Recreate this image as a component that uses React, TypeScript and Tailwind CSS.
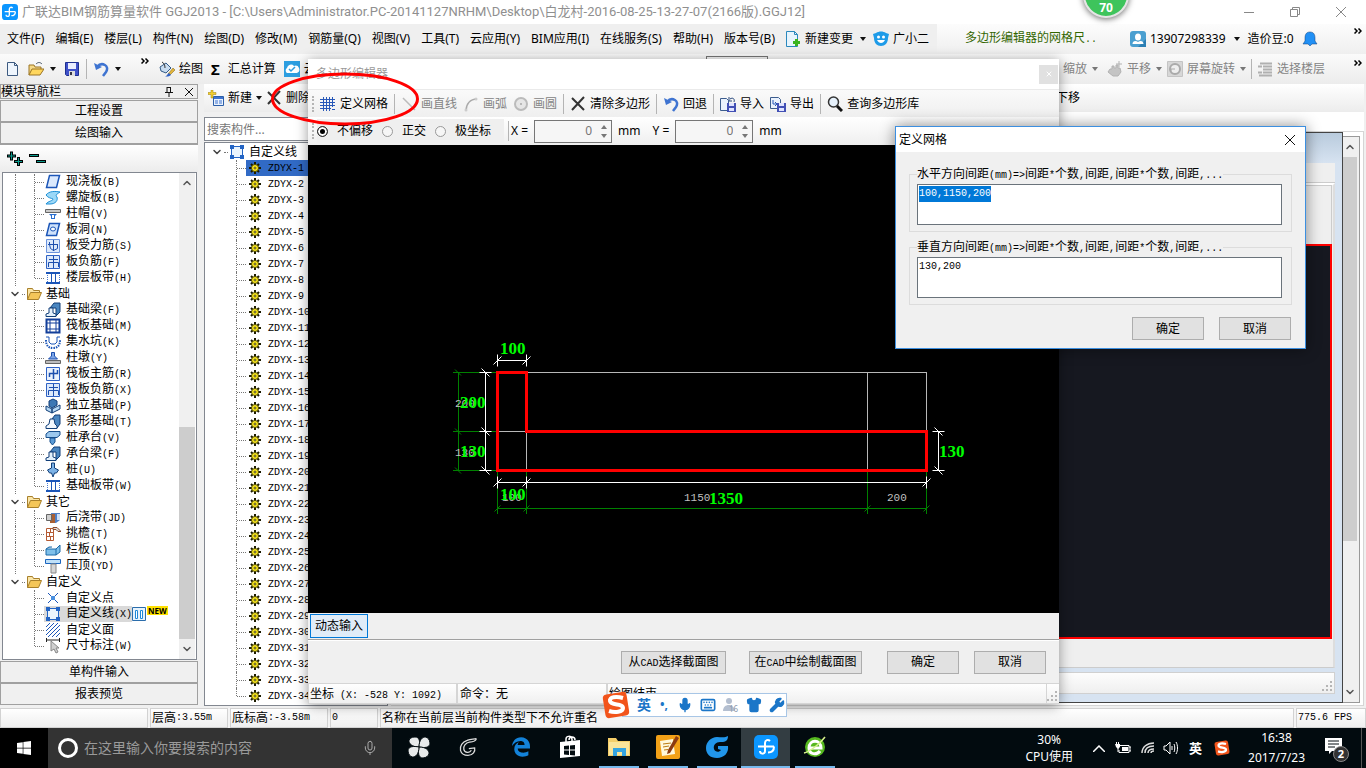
import { Fragment, useEffect, useRef } from "react";
import type { ReactNode } from "react";
import { Wrench, Mic, Shirt, Keyboard, X, ChevronDown, ChevronUp } from "lucide-react";
import { FaWindows, FaEdgeLegacy } from "react-icons/fa";

const treeGroups = [
    {
        title: "",
        items: [
            ["slab", "现浇板(B)"],
            ["spiral", "螺旋板(B)"],
            ["cap", "柱帽(V)"],
            ["hole", "板洞(N)"],
            ["rebarS", "板受力筋(S)"],
            ["rebarF", "板负筋(F)"],
            ["strip", "楼层板带(H)"],
        ],
    },
    {
        title: "基础",
        items: [
            ["beam", "基础梁(F)"],
            ["raft", "筏板基础(M)"],
            ["pit", "集水坑(K)"],
            ["pier", "柱墩(Y)"],
            ["rebarR", "筏板主筋(R)"],
            ["rebarF", "筏板负筋(X)"],
            ["footing", "独立基础(P)"],
            ["stripFooting", "条形基础(T)"],
            ["pileCap", "桩承台(V)"],
            ["beam", "承台梁(F)"],
            ["pile", "桩(U)"],
            ["strip", "基础板带(W)"],
        ],
    },
    {
        title: "其它",
        items: [
            ["pour", "后浇带(JD)"],
            ["eave", "挑檐(T)"],
            ["railing", "栏板(K)"],
            ["coping", "压顶(YD)"],
        ],
    },
    {
        title: "自定义",
        items: [
            ["point", "自定义点"],
            ["polygon", "自定义线(X)"],
            ["hatch", "自定义面"],
            ["dimension", "尺寸标注(W)"],
        ],
    },
];

const menus = [
    "文件(F)", "编辑(E)", "楼层(L)", "构件(N)", "绘图(D)", "修改(M)", "钢筋量(Q)", "视图(V)",
    "工具(T)", "云应用(Y)", "BIM应用(I)", "在线服务(S)", "帮助(H)", "版本号(B)",
];

const lineTypes = Array.from({ length: 34 }, (_, i) => `ZDYX-${i + 1}`);

const glyphs: Record<string, ReactNode> = {
    slab: <path d="M4.500 1.500h10l-3 12h-10z" fill="#dbe9fd" stroke="#1c56b8" strokeWidth="1.500" />,
    spiral: <path d="M1 5c3-4 9-4 14-3-3 2-5 3-3 5 1 3-1 7-7 7H1c2-3 7-3 7-5C6 8 3 8 1 5z" fill="#9bd8f7" stroke="#1d8fd6" />,
    cap: <><path d="M.500 3.500h15v3H.500z" fill="#c9c9c9" stroke="#666" /><path d="M4 8h8l-2 2v3H6v-3z" fill="#2b6fd0" /><path d="M7 9h2v3H7z" fill="#fff" /></>,
    hole: <><path d="M4.500 1.500h10l-3 12h-10z" fill="#cfe2fb" stroke="#1c56b8" strokeWidth="1.500" /><ellipse cx="8" cy="7" rx="2.500" ry="2" fill="#fff" stroke="#1c56b8" /></>,
    rebarS: <><path d="M1.500 1.500h13v13h-13z" fill="#dce9fb" stroke="#6b93dc" /><path d="M8.500 2v11M3 6.500h10M4.500 4v2.500l1 4 3 2 4-2v-4" fill="none" stroke="#1c4fae" /></>,
    rebarF: <><path d="M1.500 1.500h13v13h-13z" fill="#dce9fb" stroke="#2f62c4" /><path d="M8.500 2v12M4 5.500h9M3.500 13V8.500h10V13" fill="none" stroke="#1c4fae" /></>,
    rebarR: <><path d="M1.500 1.500h13v13h-13z" fill="#eaf2fd" stroke="#2f62c4" /><path d="M8.500 3v10M4.500 11V7.500h8V4" fill="none" stroke="#1c4fae" strokeWidth="1.500" /></>,
    strip: <><path d="M1 3h14M1 13h14" stroke="#1c56b8" strokeWidth="2" /><path d="M6.500 4v8M10.500 4v8" stroke="#1c56b8" /><path d="M2.500 5v7M14.500 5v7" stroke="#4a79d0" strokeDasharray="1 1" /></>,
    beam: <><path d="M5 6l4-5h6v9l-4 4V6z" fill="#4a86c0" stroke="#123f78" /><path d="M1 14.500V12l3-1V6h4v5l3 1v2.500z" fill="#e4f1fc" stroke="#123f78" /></>,
    raft: <><path d="M1.500 1.500h13v13h-13z" fill="#fff" stroke="#123f9a" strokeWidth="2" /><path d="M5 1v14M11 1v14M1 5h14M1 11h14" stroke="#123f9a" /></>,
    pit: <><path d="M1 3h3v5l2 2h4l2-2V3h3" fill="none" stroke="#1c56b8" /><path d="M1 6c0 5 2 8 7 8s7-3 7-8" fill="none" stroke="#1c56b8" strokeWidth="2" strokeDasharray="1.500 1" /></>,
    pier: <><path d="M.500 10.500h15v3H.500z" fill="#bdbdbd" stroke="#666" /><path d="M6.500 2.500h3V6l3 3h-9l3-3z" fill="#7ba4e6" stroke="#1c4fae" /></>,
    footing: <><path d="M1 8l6 3v4l-6-3zM7 11l8-4v4l-8 4z" fill="#b5d8f4" stroke="#123f78" /><path d="M4 3l4-2 4 2v4L7 10 4 8z" fill="#3d78b4" stroke="#123f78" /></>,
    stripFooting: <><path d="M7 5l3-4h5v9l-3 4z" fill="#4a86c0" stroke="#123f78" /><path d="M1 14.500V12l3-2 1-5h4l1 5 2 2v2.500z" fill="#f2f8fe" stroke="#123f78" /></>,
    pileCap: <><path d="M1 4l3-2.500h11V5l-3 2.500H1z" fill="#9cc8ee" stroke="#174f8d" /><path d="M5 8h5v4l-2.500 3L5 12z" fill="#5b9bd6" stroke="#174f8d" /></>,
    pile: <path d="M6.500 1h3v5l4 2-2 3h-2L8 15l-1.500-4h-2l-2-3 4-2z" fill="#7cb2e6" stroke="#123f78" />,
    pour: <><path d="M6 3h9v7l-4 3H6z" fill="#4f7fc4" /><path d="M5 4h5v9H5z" fill="#a85f34" /><path d="M1.500 4.500h5v6h-5z" fill="#cfcfcf" stroke="#666" /><path d="M12 4h3v6h-3z" fill="#cfe0f6" /></>,
    eave: <><path d="M1.500 2.500h7v12h-7zM1 6.500h8M1 10.500h8M5.500 2v4M4.500 6v4M5.500 10v4" fill="#fff" stroke="#b55a33" /><path d="M8 1.500h4l4 4h-3l-2-2H8z" fill="#ddd" stroke="#8b4a2b" /></>,
    railing: <path d="M1 7h10l4-4v7l-4 3H1zM1 7l3-2h3M11 7v6" fill="#7fc0ea" stroke="#1c6aa8" />,
    coping: <><path d="M.500 1.500h15v4H.500z" fill="#bfe0f8" stroke="#1c66c0" /><path d="M6 6h5v9H6z" fill="#d5d5d5" stroke="#888" /></>,
    point: <><path d="M3 3l10 10M13 3L3 13" stroke="#1c56b8" /><path d="M6 6h4v4H6z" fill="#4a90e0" /></>,
    polygon: <><path d="M2.500 2.500h11v11h-11z" fill="#eaf4fd" stroke="#2364c4" /><path d="M1 1h4v4H1zM11 1h4v4h-4zM1 11h4v4H1zM11 11h4v4h-4z" fill="#2364c4" /></>,
    hatch: <path d="M1 5l4-4M1 9l8-8M1 13l12-12M3 15L15 3M7 15l8-8M11 15l4-4" stroke="#1c56b8" />,
    dimension: <><path d="M1.500 0v4M14.500 0v4M1 2h14" stroke="#222" /><path d="M6 3v10l3-2 2 4 2-1-2-4h3z" fill="#d0d0d0" stroke="#888" /></>,
    newFile: <><path d="M3.500 1.500h7l3 3v10h-10z" fill="#eef5fd" stroke="#3d5a80" /><path d="M10.500 1.500v3h3" fill="none" stroke="#3d5a80" /></>,
    openFile: <><path d="M1 14V4h5l1 2h6v3" fill="#f5d987" stroke="#9b7524" /><path d="M1 14l3-6h12l-4 6z" fill="#ffd75e" stroke="#9b7524" /><path d="M8 3c2-2 4-2 6 0" fill="none" stroke="#456" /></>,
    folder: <><path d="M1.500 13.500v-11h5l1 2h6v3" fill="#fbe6a8" stroke="#a8802b" /><path d="M1.500 13.500l3-7h11l-3 7z" fill="#f4c659" stroke="#a8802b" /></>,
    save: <><path d="M1.500 1.500h13v13h-12l-1-1z" fill="#3f51c9" stroke="#1e2f91" /><path d="M4 2h8v6H4z" fill="#e9edff" /><path d="M5 10h6v5H5z" fill="#ddd" /><path d="M6 11h2v3H6z" fill="#334" /></>,
    undo: <><path d="M1 2l2 7 6-3z" fill="#3f74d1" /><path d="M4 6c5-6 13-1 9 5l-3 4" fill="none" stroke="#3f74d1" strokeWidth="2.500" /></>,
    paint: <><path d="M1 6l6-4 5 5-5 5-5-2z" fill="#c8dcf0" stroke="#345b87" /><path d="M3 1c2 1 3 3 3 6" fill="none" stroke="#333" /><path d="M14 7l2 2-5 5-2-1z" fill="#e2b53a" stroke="#7b5d12" strokeWidth=".500" /><path d="M10 12l2 2c-2 2-4 1-6 2 2-1 2-3 4-4z" fill="#2f62c4" /></>,
    cloud: <><path d="M0 0h16v16H0z" fill="#2d9ee0" /><path d="M3 12a3 3 0 010-5 4 4 0 017-2 3 3 0 013 7z" fill="#fff" /><path d="M5 8l2 2 4-4" fill="none" stroke="#2d9ee0" strokeWidth="1.500" /></>,
    change: <><path d="M1.500.500h8l3 3v12h-11z" fill="#e7f4fd" stroke="#2b88bd" /><path d="M9.500.500v3h3" fill="none" stroke="#2b88bd" /><path d="M10 8h3v2h2v3h-2v2h-3v-2H8v-3h2z" fill="#3bb41e" /></>,
    mascot: <><path d="M3 2c3-2 7-2 10 0l3 1-1 4c0 5-3 8-7 8S1 12 1 7L0 3z" fill="#1e9be8" /><circle cx="5.500" cy="6" r="1.500" fill="#fff" /><circle cx="10.500" cy="6" r="1.500" fill="#fff" /><path d="M4 9c2 4 6 4 8 0z" fill="#fff" /></>,
    user: <><rect width="16" height="16" rx="3" fill="#4a9fd0" /><path d="M8 16l8-8v8z" fill="#2c7fb4" /><ellipse cx="8" cy="6" rx="3" ry="3.500" fill="#fff" /><path d="M2.500 13c0-3 3-4 5.500-2 2.500-2 5.500-1 5.500 2z" fill="#fff" /></>,
    bell: <path d="M8 1c4 0 5 3 5 6v3l2 3h-5l-2 2-2-2H1l2-3V7c0-3 1-6 5-6z" fill="#2190f5" stroke="#123f78" strokeWidth=".500" />,
    hand: <path d="M3 8h2V5h2v2h2V4h2v3h2l1 4-3 4H6L1 11zM12 0v6M9 3h6" fill="#c4c4c4" stroke="#b2b2b2" />,
    rotate: <><path d="M.500.500h15v15H.500z" fill="#d7d7d7" stroke="#c4c4c4" /><circle cx="8" cy="8" r="5" fill="#eee" stroke="#aaa" strokeWidth="2" /><path d="M4 11v-3h4" fill="none" stroke="#aaa" /></>,
    floors: <path d="M3 2.500h12M1 5.500h4M6 5.500h9M6 8.500h9M1 11.500h4M6 11.500h9M2 14.500h13" stroke="#b0b0b0" strokeWidth="2" />,
    create: <><path d="M5.500 6.500h10v9h-10z" fill="#eaf2fd" stroke="#2b5ea8" /><path d="M6 7h9v2H6z" fill="#3f74d1" /><path d="M7 11h3M11 11h3M7 13h3M11 13h3" stroke="#3f74d1" /><path d="M3 0h2v2.500h3v2H5V8H3V4.500H0v-2h3z" fill="#f3cf2e" stroke="#9b7c12" strokeWidth=".500" /></>,
    grid: <path d="M3.500 1v14M6.500 1v14M9.500 1v14M12.500 1v10M0 3.500h15M0 6.500h15M0 9.500h15M0 12.500h11M12 13.500h3" stroke="#2858b8" />,
    line: <path d="M2 2l12 12" stroke="#bbb" strokeWidth="1.500" />,
    arc: <><path d="M3 15c0-7 4-12 11-12" fill="none" stroke="#aaa" strokeWidth="1.500" /><circle cx="13" cy="3" r="1.500" fill="#ccc" /><circle cx="3" cy="14" r="1.500" fill="#ccc" /></>,
    circle: <><circle cx="8" cy="8" r="6" fill="#e6e6e6" stroke="#bbb" strokeWidth="2" /><circle cx="8" cy="8" r="1" fill="#aaa" /></>,
    clear: <path d="M2 2l12 12M14 1L2 14" stroke="#333" strokeWidth="2" />,
    importFile: <><path d="M.500 2.500h6l2 2v10h-8z" fill="#eaf2fd" stroke="#3c5d8e" /><path d="M7 7h9v9H7z" fill="#4250b5" /><path d="M9 7h5v3H9zM9 12h5v3H9z" fill="#dfe3ff" /><path d="M10 3c3-2 5 0 4 3M9 1v4h3" fill="none" stroke="#28487d" /></>,
    exportFile: <><path d="M.500 1.500h8l2 2v9h-10z" fill="#eaf2fd" stroke="#3c5d8e" /><path d="M7 7h9v9H7z" fill="#4250b5" /><path d="M9 7h5v3H9zM9 12h5v3H9z" fill="#dfe3ff" /><path d="M3 4v4h4M5 6l2 2-2 2" fill="none" stroke="#2858b8" /></>,
    query: <><circle cx="6.500" cy="6" r="5" fill="#e6f1fb" stroke="#333" strokeWidth="1.500" /><path d="M10 10l5 5" stroke="#111" strokeWidth="3" /></>,
    gear: <><path d="M8 2v12M2 8h12M4 4l8 8M12 4l-8 8" stroke="#1c1c00" strokeWidth="2" /><circle cx="8" cy="8" r="3.500" fill="#ffee20" stroke="#4d4600" /><circle cx="8" cy="8" r="1" fill="#fff" stroke="#4d4600" /></>,
};

function Glyph({ name, className = "size-4" }: { name: string; className?: string }) {
    return (
        <svg viewBox="0 0 16 16" className={`shrink-0 ${className}`} aria-hidden="true">
            {glyphs[name]}
        </svg>
    );
}

// CJK at 12px with half-width latin, so that two latin letters take one CJK cell
function Song({ children }: { children: string }) {
    return (
        <>
            {children.split(/([\x20-\x7e]+)/).map((part, i) =>
                i % 2 ? (
                    <span key={i} className="font-['Liberation_Mono',monospace] text-[10px] whitespace-pre">{part}</span>
                ) : (
                    <Fragment key={i}>{part}</Fragment>
                )
            )}
        </>
    );
}

function Caret({ dim = false }: { dim?: boolean }) {
    return (
        <svg viewBox="0 0 6 4" className="h-1 w-1.5 shrink-0" aria-hidden="true">
            <path d="M0 0h6L3 4z" fill={dim ? "#777" : "#111"} />
        </svg>
    );
}

function More() {
    return (
        <button type="button" aria-label="更多" className="mt-1 shrink-0 self-start">
            <svg viewBox="0 0 8 6" className="h-1.5 w-2"><path d="M.5.5L3 3 .5 5.500M4.500.5L7 3 4.500 5.500" fill="none" stroke="#000" strokeWidth="1.500" /></svg>
        </button>
    );
}

function Sep() {
    return <span className="h-5 w-px shrink-0 bg-[#b4b4b4]" />;
}

function Grip() {
    return <span className="h-4 w-0 shrink-0 border-l-2 border-dotted border-[#b5b5b5]" />;
}

function AppMark({ className }: { className: string }) {
    return (
        <svg viewBox="0 0 24 24" className={className} aria-hidden="true">
            <rect width="24" height="24" rx="5" fill="#0b96ff" />
            <path d="M16 6c-2-2-5-1-5 2v8c0 4-5 3-5 0M4 11.500h16M20 11.500c0 4-2 6-6 6" fill="none" stroke="#fff" strokeWidth="2" />
        </svg>
    );
}

function ToolButton({ icon, label, dim = false }: { icon?: string; label: string; dim?: boolean }) {
    return (
        <button type="button" className={`flex shrink-0 items-center gap-1 whitespace-nowrap ${dim ? "text-[#848484]" : "text-black"}`}>
            {icon && <Glyph name={icon} />}
            {label}
        </button>
    );
}

function TitleBar() {
    return (
        <header className="flex h-6 shrink-0 items-center bg-white pl-0.5 text-[#8f8f8f]">
            <AppMark className="size-4 shrink-0" />
            <h1 className="ml-1 font-['Roboto','Noto_Sans_CJK_SC',sans-serif] text-[13px] whitespace-nowrap">
                广联达BIM钢筋算量软件 GGJ2013 - [C:\Users\Administrator.PC-20141127NRHM\Desktop\白龙村-2016-08-25-13-27-07(2166版).GGJ12]
            </h1>
            <div className="ml-auto flex items-center gap-9 pr-5">
                <button type="button" aria-label="最小化" className="h-px w-2.5 bg-[#888]" />
                <button type="button" aria-label="还原">
                    <svg viewBox="0 0 10 10" className="size-2.5"><path d="M.5 2.500h7v7h-7zM2.500 2V.5h7v7H8" fill="none" stroke="#888" /></svg>
                </button>
                <button type="button" aria-label="关闭">
                    <svg viewBox="0 0 10 10" className="size-2.5"><path d="M0 0l10 10M10 0L0 10" stroke="#888" /></svg>
                </button>
            </div>
        </header>
    );
}

function MenuBar() {
    return (
        <nav className="flex h-[30px] shrink-0 items-center bg-[#efefef] pl-[7px]">
            <div className="flex gap-[11px]">
                {menus.map((m) => (
                    <button key={m} type="button" className="whitespace-nowrap">{m}</button>
                ))}
            </div>
            <div className="ml-2.5 flex items-center gap-[7px]">
                <ToolButton icon="change" label="新建变更" />
                <Caret />
                <ToolButton icon="mascot" label="广小二" />
            </div>
            <div className="ml-auto flex h-full w-[429px] shrink-0 items-center bg-linear-to-b from-[#fcfcfc] to-[#efefef] pl-7">
                <span className="w-[165px] text-[#336600]"><Song>多边形编辑器的网格尺..</Song></span>
                <ToolButton icon="user" label="13907298339" />
                <span className="ml-2 flex"><Caret /></span>
                <span className="ml-2 whitespace-nowrap">造价豆:0</span>
                <Glyph name="bell" className="ml-2 size-4" />
                <span className="ml-auto flex self-start pr-1"><More /></span>
            </div>
        </nav>
    );
}

function MainToolbar() {
    return (
        <div className="flex h-[30px] shrink-0 items-center bg-linear-to-b from-[#fbfbfb] to-[#ececec] pl-1">
            <Glyph name="newFile" />
            <Glyph name="openFile" className="ml-2 size-4" />
            <span className="ml-1.5 flex"><Caret /></span>
            <Glyph name="save" className="ml-2 size-4" />
            <span className="ml-1.5 flex"><Sep /></span>
            <Glyph name="undo" className="ml-1.5 size-4" />
            <span className="ml-1.5 flex"><Caret /></span>
            <span className="ml-5 flex self-start"><More /></span>
            <div className="ml-2.5 flex items-center gap-2">
                <ToolButton icon="paint" label="绘图" />
                <button type="button" className="flex items-center gap-2 whitespace-nowrap"><span className="text-[15px] font-bold">Σ</span>汇总计算</button>
                <ToolButton icon="cloud" label="云检查" />
            </div>
            <div className="ml-auto flex items-center gap-[5px]">
                <select aria-label="视图" className="mr-[290px] h-[26px] w-[62px] appearance-none border border-[#777] bg-[#f4f4f4]" />
                <ToolButton label="缩放" dim />
                <Caret dim />
                <span className="ml-1 flex"><ToolButton icon="hand" label="平移" dim /></span>
                <Caret dim />
                <ToolButton icon="rotate" label="屏幕旋转" dim />
                <Caret dim />
                <Sep />
                <ToolButton icon="floors" label="选择楼层" dim />
                <span className="ml-6 flex self-start pr-1"><More /></span>
            </div>
        </div>
    );
}

function NavTree() {
    return (
        <div className="flex min-h-0 flex-1 border border-[#828790] bg-white">
            <ul className="min-w-0 flex-1 overflow-hidden pt-px">
                {treeGroups.map((g, gi) => (
                    <li key={gi}>
                        {g.title && (
                            <div className="flex h-4 items-center pl-[6px]">
                                <ChevronDown className="size-3 shrink-0" strokeWidth={3} color="#444" />
                                <span className="mx-px w-[3px] border-t border-dotted border-[#777]" />
                                <Glyph name="folder" />
                                <span className="ml-1 leading-4">{g.title}</span>
                            </div>
                        )}
                        <ul>
                            {g.items.map(([icon, label], i) => {
                                const selected = icon === "polygon";
                                return (
                                    <li key={label} className="flex h-4 items-center pl-3">
                                        <span className={`h-full w-[19px] shrink-0 border-dotted border-[#777] ${gi < 3 ? "border-l" : ""}`} />
                                        <span className={`w-0 shrink-0 self-start border-l border-dotted border-[#777] ${i === g.items.length - 1 ? "h-2" : "h-4"}`} />
                                        <span className="w-[9px] shrink-0 border-t border-dotted border-[#777]" />
                                        <button type="button" className={`flex h-4 shrink-0 items-center gap-[5px] pl-px leading-4 whitespace-nowrap ${selected ? "bg-[#d9d9d9]" : ""}`}>
                                            <Glyph name={icon} />
                                            <span><Song>{label}</Song></span>
                                        </button>
                                        {selected && (
                                            <>
                                                <svg viewBox="0 0 14 14" className="size-3.5 shrink-0" aria-hidden="true">
                                                    <path d="M.5.5h13v13H.5z" fill="#e6f3fd" stroke="#2b6dab" />
                                                    <path d="M3.500 3.500h2v8h-2zM8.500 3.500h2v8h-2z" fill="#fff" stroke="#1e88d8" />
                                                </svg>
                                                <span className="ml-px self-start bg-[#ffe100] px-px text-[8px] leading-[9px] font-bold">NEW</span>
                                            </>
                                        )}
                                    </li>
                                );
                            })}
                        </ul>
                    </li>
                ))}
            </ul>
            <div className="mr-px flex w-4 shrink-0 flex-col items-center bg-[#f0f0f0]">
                <ChevronUp className="my-1 size-3 shrink-0" strokeWidth={3} color="#555" />
                <div className="h-[234px]" />
                <div className="w-full flex-1 bg-[#cdcdcd]" />
                <ChevronDown className="my-1 size-3 shrink-0" strokeWidth={3} color="#555" />
            </div>
        </div>
    );
}

function Navigator() {
    const bar = "h-[22px] w-full shrink-0 border border-[#a0a0a0] bg-[#f0f0f0] leading-5";
    return (
        <aside className="flex w-[198px] shrink-0 flex-col pb-[3px]">
            <div className="flex h-[15px] items-center border border-[#a0a0a0] bg-[#efefef] pr-1">
                <h2 className="flex-1 leading-[13px]">模块导航栏</h2>
                <svg viewBox="0 0 8 10" className="mr-3 h-2.5 w-2"><path d="M2 0v5M5.500 0v5M2 .500h4M0 5.500h8M4 6v4" fill="none" stroke="#111" /></svg>
                <svg viewBox="0 0 8 8" className="size-2"><path d="M0 0l8 8M8 0L0 8" stroke="#111" /></svg>
            </div>
            <button type="button" className={`mt-px ${bar}`}>工程设置</button>
            <button type="button" className={bar}>绘图输入</button>
            <div className="flex h-7 shrink-0 items-center border-t border-[#a0a0a0] bg-linear-to-b from-white to-[#ececec] pl-[7px]">
                <svg viewBox="0 0 40 16" className="h-4 w-10" aria-hidden="true">
                    <path d="M0 5h9M4.500.500v9M7 10.500h9M11.500 6v9M22 4.500h10M29 10.500h10" stroke="#000" strokeWidth="3" />
                    <path d="M1 5h7M4.500 1.500v7M8 10.500h7M11.500 7v7M23 4.500h8M30 10.500h8" stroke="#0a9a8c" />
                </svg>
            </div>
            <div className="flex min-h-0 flex-1 flex-col pr-px pb-px pl-0.5"><NavTree /></div>
            <button type="button" className={bar}>单构件输入</button>
            <button type="button" className={bar}>报表预览</button>
        </aside>
    );
}

function ComponentList() {
    return (
        <section className="flex w-[184px] shrink-0 flex-col pb-[2px]">
            <div className="flex h-7 shrink-0 items-center gap-1 bg-linear-to-b from-white to-[#ececec] pl-1">
                <ToolButton icon="create" label="新建" />
                <Caret />
                <ToolButton icon="clear" label="删除" />
            </div>
            <label className="mt-[5px] mb-px shrink-0">
                <input aria-label="搜索构件" placeholder="搜索构件..." className="h-6 w-full border border-[#828790] bg-white px-0.5 placeholder:text-[#777]" />
            </label>
            <ul className="min-h-0 flex-1 overflow-hidden border border-[#828790] bg-white pt-px">
                <li className="flex h-4 items-center pl-1.5">
                    <ChevronDown className="size-3" strokeWidth={3} color="#444" />
                    <span className="mr-px ml-px w-1 border-t border-dotted border-[#777]" />
                    <Glyph name="polygon" />
                    <span className="ml-1 leading-4">自定义线</span>
                </li>
                {lineTypes.map((name, i) => (
                    <li key={name} className="flex h-4 items-center pl-[31px]">
                        <span className={`w-0 self-start border-l border-dotted border-[#777] ${i === 33 ? "h-2" : "h-4"}`} />
                        <span className="w-[9px] border-t border-dotted border-[#777]" />
                        <button type="button" className={`flex h-4 flex-1 items-center gap-[5px] pl-px leading-4 ${i === 0 ? "bg-[#316ac5]" : ""}`}>
                            <Glyph name="gear" />
                            <span><Song>{name}</Song></span>
                        </button>
                    </li>
                ))}
            </ul>
        </section>
    );
}

function Workspace() {
    return (
        <section className="flex min-w-0 flex-1 flex-col pr-0.5 pb-[2px]">
            <div className="flex h-7 shrink-0 items-center justify-end bg-linear-to-b from-white to-[#ececec] pr-[284px]">下移</div>
            <div className="h-5 shrink-0 border-b border-[#d5d5d5] bg-white" />
            <div className="flex min-h-0 flex-1 border-r border-b border-[#d5d5d5] bg-white pr-[3px] pb-[2px]">
                <div className="flex min-w-0 flex-1 flex-col border border-[#444] bg-linear-to-b from-[#b9cbdd] to-[#d7e3f1] to-[30px] pt-[30px] pr-[7px] pb-2">
                    <div className="h-5 shrink-0 border-b border-[#ccc] bg-[#efefef]" />
                    <div className="flex min-h-0 flex-1 flex-col border-t-2 border-r-2 border-b border-t-white border-r-[#ddd] border-b-[#ccc] bg-[#efefef]">
                        <div className="mr-px h-[59px] shrink-0 border-t border-r border-[#ccc]" />
                        <div className="mr-px min-h-0 flex-1 border-2 border-[#ff0000] bg-[#161820]" />
                        <div className="h-7 shrink-0" />
                    </div>
                    <div className="mt-1 flex h-[22px] shrink-0 items-end justify-end border border-[#d0d0d0] bg-linear-to-b from-[#fdfdfd] to-[#efefef]">
                        <ResizeGrip />
                    </div>
                </div>
                <div className="mt-1 flex w-[17px] shrink-0 flex-col items-center border border-l-0 border-[#999] bg-[#f0f0f0] pr-0.5">
                    <ChevronUp className="my-1 size-3 shrink-0" strokeWidth={3} color="#555" />
                    <div className="h-[384px] w-full bg-[#cdcdcd]" />
                    <ChevronDown className="mt-auto mb-1 size-3 shrink-0" strokeWidth={3} color="#555" />
                </div>
            </div>
        </section>
    );
}

function ResizeGrip() {
    return (
        <svg viewBox="0 0 12 12" className="size-3 shrink-0" aria-hidden="true">
            <path d="M8 0h2v2H8zM4 4h2v2H4zM8 4h2v2H8zM0 8h2v2H0zM4 8h2v2H4zM8 8h2v2H8z" fill="#b5b5b5" />
        </svg>
    );
}

function StatusBar() {
    const cell = "flex shrink-0 items-center border border-[#d2d2d2] bg-linear-to-b from-white to-[#efefef] pl-px";
    return (
        <footer className="flex h-5 shrink-0 gap-0.5 bg-[#f4f4f4] leading-4 whitespace-nowrap">
            <span className={`${cell} w-[148px]`} />
            <span className={`${cell} w-[78px]`}><Song>层高:3.55m</Song></span>
            <span className={`${cell} w-[98px]`}><Song>底标高:-3.58m</Song></span>
            <span className={`${cell} w-12`}><Song>0</Song></span>
            <span className={`${cell} flex-1`}>名称在当前层当前构件类型下不允许重名</span>
            <span className={`${cell} w-[70px]`}><Song>775.6 FPS</Song></span>
        </footer>
    );
}

const green = "#008000";

function hDim(x: number, y: number, color: string, key: string) {
    return <path key={key} d={`M${x} ${y - 6}v12M${x - 4} ${y + 4}l8-8`} stroke={color} />;
}

function vDim(x: number, y: number, color: string, key: string) {
    return <path key={key} d={`M${x - 6} ${y}h12M${x - 4} ${y - 4}l8 8`} stroke={color} />;
}

function Drawing() {
    const xs = [497.5, 526.5, 867.5, 926.5];
    const ys = [372.5, 431.5, 470.5];
    return (
        <svg viewBox="308 145 751 468" className="block w-full min-h-0 flex-1 bg-black" fill="none" role="img" aria-label="截面图">
            <path d="M526 372.500h401M867.500 372v98M926.500 372v60M497 431.500h29M526.500 432v38" stroke="#b8b8b8" />
            <path d="M458.500 372v98M497 508.500h430" stroke={green} />
            {ys.map((y) => <path key={y} d={`M453 ${y}h44M455 ${y - 3}l6 6`} stroke={green} />)}
            {xs.map((x) => <path key={x} d={`M${x} 470v44M${x - 3} 511.500l6-6`} stroke={green} />)}
            <g fill="#c0c0c0" className="font-['Liberation_Mono',monospace] text-[11px]">
                <text x="455" y="407">200</text>
                <text x="455" y="456">130</text>
                <text x="502" y="501">100</text>
                <text x="684" y="501">1150</text>
                <text x="887" y="501">200</text>
            </g>
            <path d="M497 360.500h30M485.500 372v99M497 482.500h430M938.500 431v40" stroke="#fff" />
            {[xs[0], xs[1]].map((x) => hDim(x, 360.5, "#fff", `t${x}`))}
            {[xs[0], xs[1], xs[3]].map((x) => hDim(x, 482.5, "#fff", `b${x}`))}
            {ys.map((y) => vDim(485.5, y, "#fff", `l${y}`))}
            {[ys[1], ys[2]].map((y) => vDim(938.5, y, "#fff", `r${y}`))}
            <path d="M497.500 372.500h29v59h400v39h-429z" stroke="#ff0000" strokeWidth="3" />
            <g fill="#00ff00" className="font-['Liberation_Serif',serif] text-[17px] font-bold">
                <text x="500" y="354">100</text>
                <text x="460" y="408">200</text>
                <text x="460" y="457">130</text>
                <text x="500" y="500">100</text>
                <text x="709" y="504">1350</text>
                <text x="939" y="457">130</text>
            </g>
        </svg>
    );
}

function OffsetField({ axis }: { axis: string }) {
    return (
        <>
            <label htmlFor={`offset-${axis}`} className="whitespace-pre">{axis} =</label>
            <span className="mx-1.5 flex h-[23px] w-[78px] border border-[#767676] bg-[#f6f6f6]">
                <input id={`offset-${axis}`} defaultValue="0" className="w-[61px] pr-1 text-right text-[#777]" />
                <span className="flex flex-1 flex-col items-center justify-between py-1">
                    <span className="flex rotate-180"><Caret dim /></span>
                    <Caret dim />
                </span>
            </span>
            <span>mm</span>
        </>
    );
}

function PushButton({ label, className = "w-[72px]" }: { label: string; className?: string }) {
    return (
        <button type="button" className={`h-[23px] shrink-0 border border-[#adadad] bg-[#e1e1e1] leading-5 whitespace-nowrap ${className}`}>
            <Song>{label}</Song>
        </button>
    );
}

function PolygonEditor() {
    const modes = ["不偏移", "正交", "极坐标"];
    return (
        <section className="absolute top-[59px] left-[308px] flex h-[645px] w-[751px] flex-col bg-[#f0f0f0] shadow-[0_2px_12px_rgba(0,0,0,0.4)]">
            <div className="flex h-[30px] shrink-0 items-center justify-between bg-white pr-px pl-2">
                <h2 className="text-[#9a9a9a]">多边形编辑器</h2>
                <button type="button" aria-label="关闭" className="flex size-[19px] items-center justify-center bg-[#e1e1e1] text-white">
                    <X className="size-2" strokeWidth={3} />
                </button>
            </div>
            <div className="flex h-7 shrink-0 items-center gap-1.5 border-t border-[#eaeaea] bg-linear-to-b from-[#fafafa] to-[#efefef] pl-1">
                <Grip />
                <ToolButton icon="grid" label="定义网格" />
                <Sep />
                <ToolButton icon="line" label="画直线" dim />
                <ToolButton icon="arc" label="画弧" dim />
                <ToolButton icon="circle" label="画圆" dim />
                <Sep />
                <ToolButton icon="clear" label="清除多边形" />
                <Sep />
                <ToolButton icon="undo" label="回退" />
                <Sep />
                <ToolButton icon="importFile" label="导入" />
                <ToolButton icon="exportFile" label="导出" />
                <Sep />
                <ToolButton icon="query" label="查询多边形库" />
            </div>
            <div className="flex h-7 shrink-0 items-center bg-linear-to-b from-white to-[#efefef] pl-1">
                <Grip />
                <div className="mr-1 ml-[3px] flex h-6 w-[187px] items-center gap-[9px] bg-[#efefef]">
                    {modes.map((m, i) => (
                        <label key={m} className="flex items-center gap-[9px] whitespace-nowrap">
                            <input
                                type="radio"
                                name="mode"
                                defaultChecked={i === 0}
                                className="size-[11px] appearance-none rounded-full border border-[#999] bg-[#f6f6f6] checked:border-[#333] checked:bg-black checked:shadow-[inset_0_0_0_2px_white]"
                            />
                            {m}
                        </label>
                    ))}
                </div>
                <Sep />
                <div className="flex items-center pl-0.5">
                    <OffsetField axis="X" />
                    <span className="w-3" />
                    <OffsetField axis="Y" />
                </div>
            </div>
            <Drawing />
            <div className="flex h-[27px] shrink-0 items-center border-b border-[#a0a0a0] pl-0.5">
                <button type="button" className="h-6 border border-[#0078d7] bg-[#e0ecf8] px-1 leading-5">动态输入</button>
            </div>
            <div className="flex h-[43px] shrink-0 items-center justify-end border-t border-white pr-[13px]">
                <PushButton label="从CAD选择截面图" className="w-[105px]" />
                <PushButton label="在CAD中绘制截面图" className="ml-[23px] w-[113px]" />
                <PushButton label="确定" className="ml-[25px] w-[72px]" />
                <PushButton label="取消" className="ml-[15px] w-[72px]" />
            </div>
            <div className="flex h-[21px] shrink-0 bg-linear-to-b from-white to-[#efefef] leading-[19px] whitespace-nowrap">
                <span className="w-[149px] border border-[#d5d5d5] pl-px"><Song>坐标 (X: -528 Y: 1092)</Song></span>
                <span className="w-[150px] border border-[#d5d5d5] pl-0.5">命令：无</span>
                <span className="flex-1 border border-[#d5d5d5] pl-px">绘图结束</span>
                <span className="flex items-end border-y border-[#d5d5d5]"><ResizeGrip /></span>
            </div>
        </section>
    );
}

function SpacingField({ id, label, value }: { id: string; label: string; value: string }) {
    const ref = useRef<HTMLTextAreaElement>(null);

    useEffect(() => {
        if (id === "horizontal") ref.current?.select();
    }, [id]);

    return (
        <fieldset className="border border-[#dcdcdc] pr-[9px] pb-[6px] pl-[7px]">
            <legend className="h-3 leading-3 whitespace-nowrap">
                <label htmlFor={id}><Song>{label}</Song></label>
            </legend>
            <textarea
                ref={ref}
                id={id}
                defaultValue={value}
                className="mt-1 block h-[41px] w-full resize-none border border-[#6a737b] bg-white px-px pt-px font-['Liberation_Mono',monospace] text-[10px] leading-4 outline-none selection:bg-[#0078d7] selection:text-white"
            />
        </fieldset>
    );
}

function GridDialog() {
    return (
        <section role="dialog" aria-label="定义网格" className="absolute top-[126px] left-[895px] w-[411px] border border-[#3c8fe0] bg-[#f0f0f0] shadow-[0_0_14px_rgba(0,0,0,0.45)]">
            <div className="flex h-[25px] items-center justify-between bg-white pr-2.5 pl-[3px]">
                <h2>定义网格</h2>
                <button type="button" aria-label="关闭">
                    <svg viewBox="0 0 10 10" className="size-2.5"><path d="M0 0l10 10M10 0L0 10" stroke="#111" /></svg>
                </button>
            </div>
            <div className="flex flex-col gap-[9px] px-[13px] pt-4">
                <SpacingField id="horizontal" label="水平方向间距(mm)=>间距*个数,间距,间距*个数,间距,..." value="100,1150,200" />
                <SpacingField id="vertical" label="垂直方向间距(mm)=>间距*个数,间距,间距*个数,间距,..." value="130,200" />
            </div>
            <div className="flex justify-end gap-[15px] pt-3 pr-3.5 pb-2">
                <PushButton label="确定" />
                <PushButton label="取消" />
            </div>
        </section>
    );
}

function SogouMark({ className }: { className: string }) {
    return (
        <svg viewBox="0 0 28 28" className={className} aria-hidden="true">
            <rect x="2" y="2" width="24" height="24" rx="4" fill="#f2541b" transform="rotate(-9 14 14)" />
            <path d="M21 7C14 5 7 6 8 10c1 5 13 2 13 7 0 4-8 5-14 3" fill="none" stroke="#fff" strokeWidth="4" />
        </svg>
    );
}

function ImeBar() {
    return (
        <div className="absolute top-[690px] left-[602px] flex h-[29px] items-center">
            <SogouMark className="z-10 size-7" />
            <div className="-ml-2 flex h-6 w-[165px] items-center gap-[7px] border border-[#a8c6e6] bg-white pl-3.5 text-[#1b76c8]">
                <span className="text-[14px] leading-5 font-bold">英</span>
                <span className="w-3 text-center font-bold">•,</span>
                <Mic className="size-4" fill="currentColor" />
                <Keyboard className="size-4" strokeWidth={2.5} />
                <svg viewBox="0 0 16 16" className="size-4 text-[#b4bfd0]"><circle cx="6" cy="4" r="3" fill="currentColor" /><path d="M0 14c0-8 11-8 12 0z" fill="currentColor" /><text x="6" y="15" fontSize="8" fill="#8b99ae">16</text></svg>
                <Shirt className="size-4" fill="currentColor" />
                <Wrench className="size-4" fill="currentColor" />
            </div>
        </div>
    );
}

function TaskSlot({ children, running = false, active = false }: { children: ReactNode; running?: boolean; active?: boolean }) {
    return (
        <button type="button" className={`flex h-full w-[49px] shrink-0 flex-col items-center ${active ? "bg-[#333d42]" : ""}`}>
            <span className="flex flex-1 items-center">{children}</span>
            <span className={`h-0.5 ${active ? "w-full" : "w-10"} ${running ? "bg-[#76b9ed]" : ""}`} />
        </button>
    );
}

function Taskbar() {
    return (
        <footer className="flex h-10 shrink-0 items-center bg-[#020b0f] text-white">
            <button type="button" aria-label="开始" className="flex h-full w-12 shrink-0 items-center justify-center bg-black">
                <FaWindows className="size-4" />
            </button>
            <label className="flex h-full w-[344px] shrink-0 items-center bg-[#333] pr-3.5 pl-2.5">
                <span className="size-5 shrink-0 rounded-full border-[3px] border-white" />
                <input aria-label="搜索" placeholder="在这里输入你要搜索的内容" className="ml-1.5 min-w-0 flex-1 text-[14px] placeholder:text-[#9a9a9a]" />
                <Mic className="size-4 text-[#aaa]" strokeWidth={1.5} />
            </label>
            <div className="ml-0.5 flex h-full">
                <TaskSlot>
                    <svg viewBox="0 0 24 24" className="size-6"><g fill="#e8eaea" stroke="#020b0f" strokeWidth="1"><path d="M12 12C0 12-1 2 8 2c5 0 5 5 4 10z" /><path d="M12 12c0-12 10-13 11-4 0 5-6 5-11 4z" /><path d="M12 12c12 0 13 10 4 11-5 0-5-6-4-11z" /><path d="M12 12c0 12-10 13-11 4 0-5 6-5 11-4z" /></g></svg>
                </TaskSlot>
                <TaskSlot>
                    <svg viewBox="0 0 24 24" className="size-5" fill="none" stroke="#ddd" strokeWidth="1.500"><path d="M22 2c-3 1-7 0-11 2C5 6 2 11 3 16c1 4 5 6 9 6 6 0 9-5 8-9l-7 1" /><path d="M22 2c-1 4-5 4-8 4-5 1-8 5-7 9 1 4 7 5 9 1" /></svg>
                </TaskSlot>
                <span className="w-1" />
                <TaskSlot><FaEdgeLegacy className="size-5 text-[#1382d9]" /></TaskSlot>
                <TaskSlot>
                    <svg viewBox="0 0 22 24" className="h-6 w-[22px]"><path d="M1 7l20-2v16L1 23z" fill="#fff" /><path d="M7 7V4c0-3 5-4 6 0v2M10 5c0-4 6-4 6 0" fill="none" stroke="#fff" strokeWidth="1.500" /><path d="M5 11l5-.5v4H5zM11 10.500l5-.5v4.500h-5zM5 15.500h5V20l-5-.5zM11 15.500h5v5l-5-.5z" fill="#020b0f" /></svg>
                </TaskSlot>
                <TaskSlot running>
                    <svg viewBox="0 0 22 20" className="h-5 w-[22px]"><path d="M0 1h8l2 3h12v15H0z" fill="#f5cf6a" /><path d="M1 5h20v13H1z" fill="#fbe59a" /><path d="M5 19v-8h13v8h-4v-4H9v4z" fill="#35a4e0" /></svg>
                </TaskSlot>
                <TaskSlot running>
                    <svg viewBox="0 0 24 24" className="size-6"><rect width="24" height="24" rx="2" fill="#f2a117" /><path d="M4 6l13-2 2 15-13 2z" fill="#fff8dc" /><path d="M7 9l8-1M7 12l6-1M8 15l4-.5" stroke="#bb7a12" /><path d="M20 1l3 2-9 15-3 1 1-4z" fill="#8b3b12" /></svg>
                </TaskSlot>
                <TaskSlot running>
                    <svg viewBox="0 0 24 24" className="size-6"><path d="M23 1c0 6-4 6-8 6-4 0-7 3-6 7 1 3 5 4 7 1l-3-1v-3h10c1 7-4 12-11 12C5 23 1 19 1 13 1 7 6 2 12 2c4 0 8 1 11-1z" fill="#2196ea" /></svg>
                </TaskSlot>
                <TaskSlot running active><AppMark className="size-6" /></TaskSlot>
                <TaskSlot running>
                    <svg viewBox="0 0 24 24" className="size-6"><circle cx="12" cy="12" r="10" fill="#55b81f" /><path d="M5 13h13c0-9-12-9-12 0 0 7 8 7 11 3" fill="none" stroke="#fff" strokeWidth="3" /><path d="M1 18C6 17 17 9 22 2" fill="none" stroke="#d6f08c" strokeWidth="1.500" /></svg>
                </TaskSlot>
            </div>
            <div className="ml-auto flex h-full items-center">
                <div className="mr-5 text-center leading-[17px]"><div>30%</div><div>CPU使用</div></div>
                <svg viewBox="0 0 12 7" className="mr-2.5 h-[7px] w-3"><path d="M0 7l6-6 6 6" fill="none" stroke="#fff" strokeWidth="1.500" /></svg>
                <svg viewBox="0 0 16 12" className="mr-2.5 h-3 w-4"><path d="M5 3.500h9v7H4V8M14 5h2v4h-2" fill="none" stroke="#fff" /><path d="M7 5h6v4H7zM0 2h5v3L3 7 1 5z" fill="#fff" /><path d="M1.500 0v2M3.500 0v2M3 6v4" stroke="#fff" /></svg>
                <svg viewBox="0 0 14 14" className="mr-2 size-3.5" fill="none" stroke="#ddd"><path d="M1 12C1 6 6 2 13 2M4 12c0-4 3-7 9-7M7 12c0-2 2-4 6-4M10 12c0-1 1-2 3-2" strokeWidth="1.500" /></svg>
                <svg viewBox="0 0 16 14" className="mr-2.5 h-3.5 w-4" fill="none" stroke="#fff"><path d="M1 5h2l4-4v12L3 9H1zM9 5v4M11 3c1 2 1 6 0 8M13 1c2 3 2 9 0 12" /></svg>
                <span className="mr-3 text-[13px] font-bold">英</span>
                <SogouMark className="mr-[18px] size-4" />
                <div className="mr-5 text-center leading-5"><div>16:38</div><div>2017/7/23</div></div>
                <div className="relative mr-3 h-7 w-6">
                    <svg viewBox="0 0 17 16" className="mt-1 h-4 w-[17px]"><path d="M0 0h17v13H7l-3 3v-3H0z" fill="#fff" /><path d="M3 3h11M3 6h11M3 9h7" stroke="#020b0f" /></svg>
                    <span className="absolute right-0 bottom-0 flex size-4 items-center justify-center rounded-full border border-[#888] bg-[#333] text-[11px] font-bold">2</span>
                </div>
                <span className="mr-1 h-full w-px bg-[#555]" />
            </div>
        </footer>
    );
}

export default function App() {
    return (
        <div className="relative flex h-screen flex-col overflow-hidden bg-[#f0f0f0] font-['Noto_Sans','Noto_Sans_CJK_SC',sans-serif] text-[12px] leading-4 text-black">
            <TitleBar />
            <MenuBar />
            <MainToolbar />
            <main className="flex min-h-0 flex-1">
                <Navigator />
                <div className="w-1.5 shrink-0" />
                <ComponentList />
                <div className="w-[3px] shrink-0" />
                <Workspace />
            </main>
            <StatusBar />
            <Taskbar />

            <PolygonEditor />
            <GridDialog />
            <ImeBar />
            <div className="absolute top-[-28px] left-[1083px] flex size-[46px] items-end justify-center rounded-full border-2 border-[#e5e5e5] bg-[#3ec45c] font-bold text-white shadow-[0_1px_6px_rgba(0,0,0,0.6)]">70</div>
            <svg viewBox="0 0 148 54" className="pointer-events-none absolute top-[72px] left-[271px] h-[54px] w-[148px]" fill="none" aria-hidden="true">
                <ellipse cx="74" cy="27" rx="72.500" ry="25" stroke="#ff0000" strokeWidth="3" />
            </svg>
        </div>
    );
}
